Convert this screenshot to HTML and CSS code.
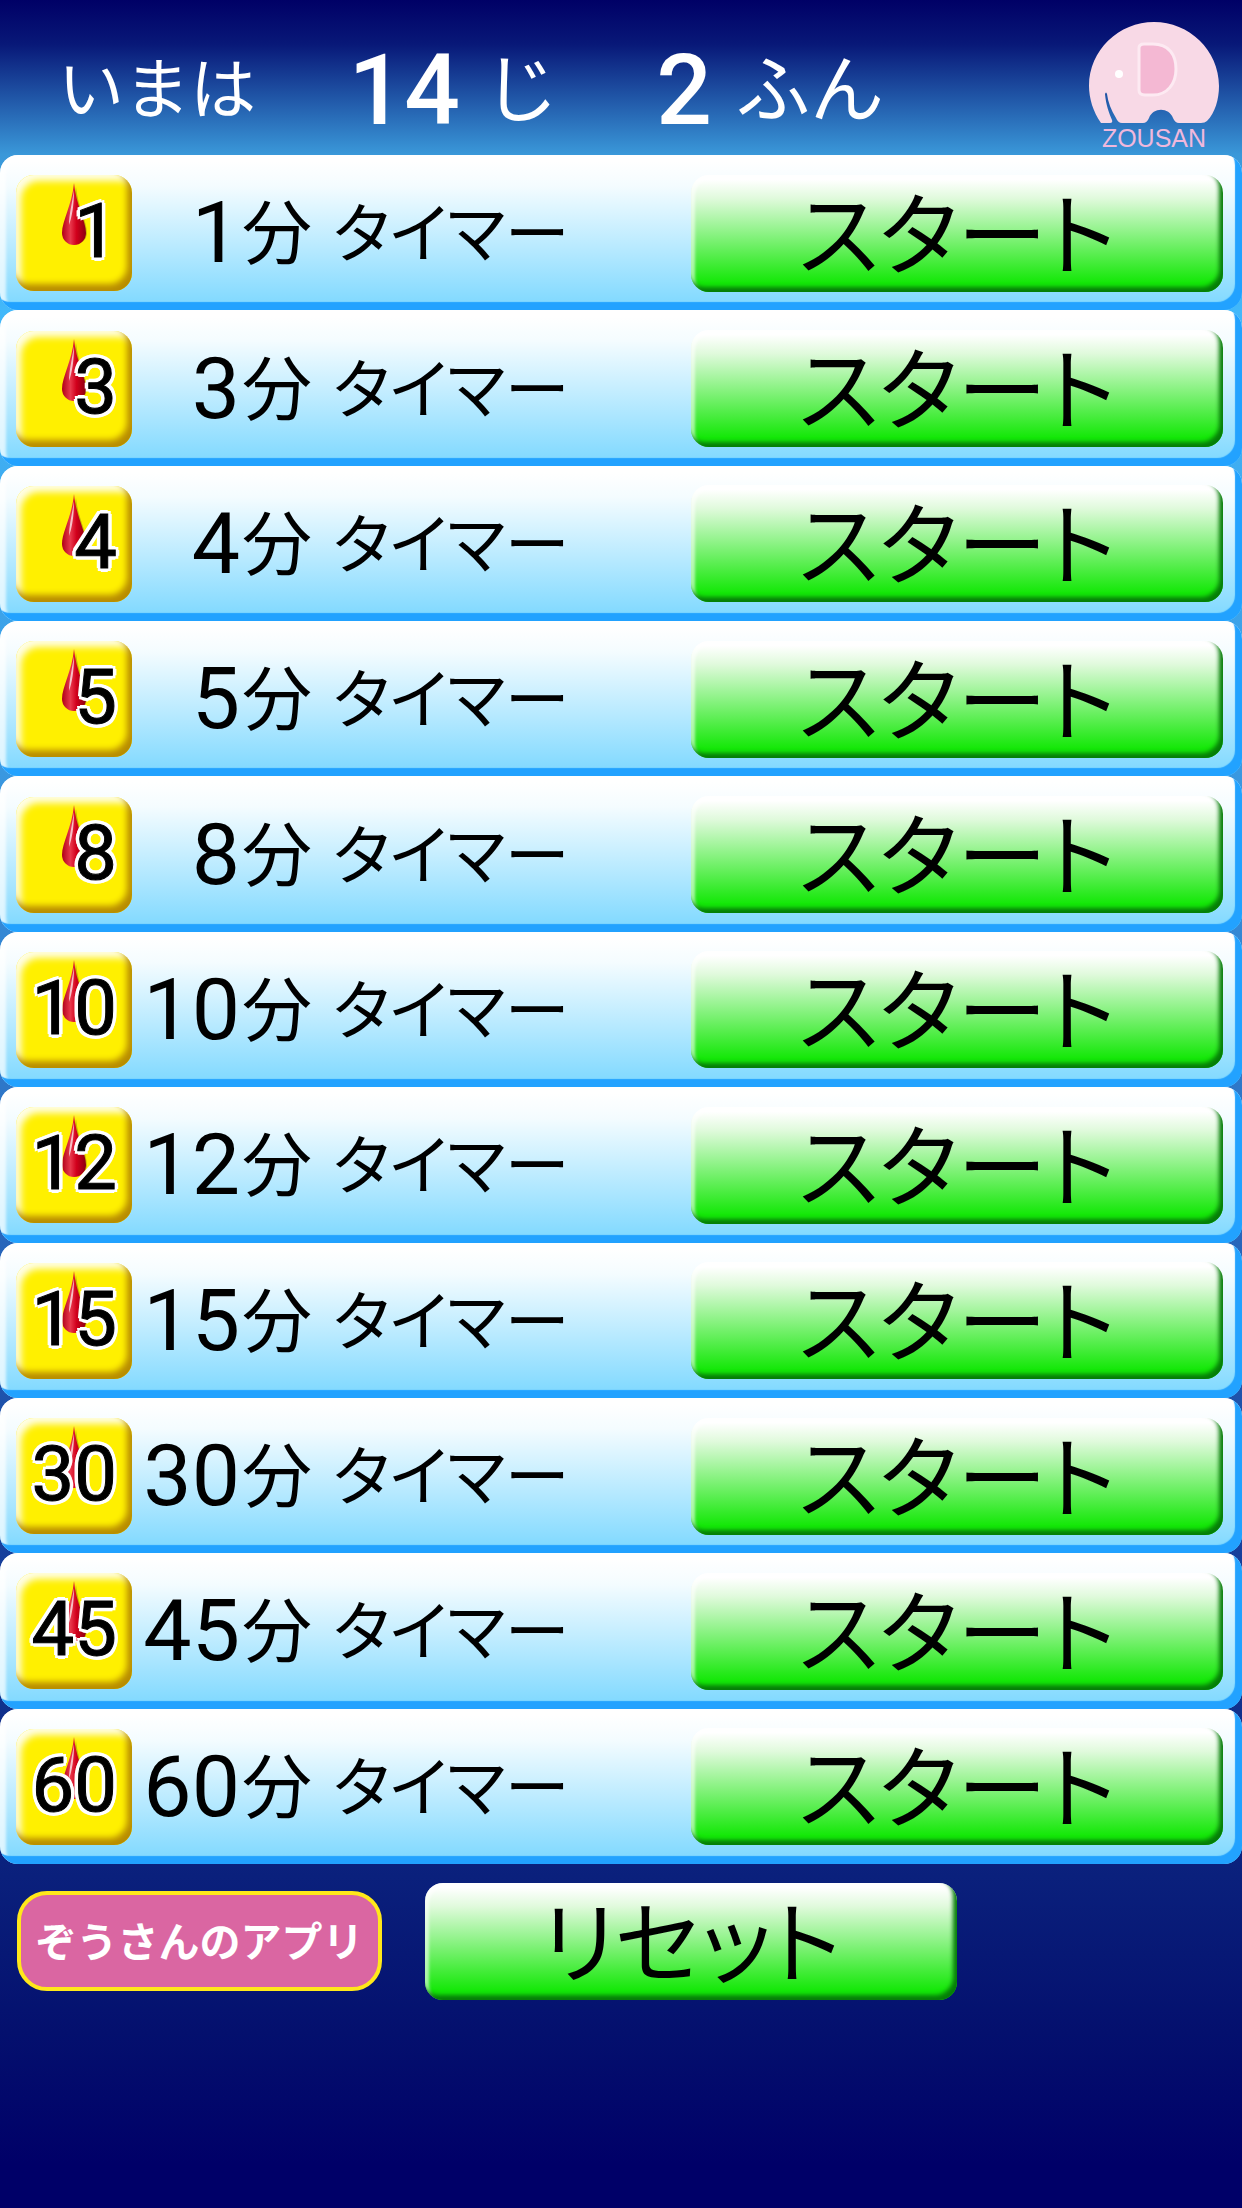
FILE: index.html
```html
<!DOCTYPE html>
<html lang="ja">
<head>
  <meta charset="UTF-8">
  <meta name="viewport" content="width=device-width, initial-scale=1">
  <title>タイマー</title>
  <link rel="stylesheet" href="styles.css">
</head>
<body>
  <svg class="defs" aria-hidden="true">
    <defs>
      <linearGradient id="drop-red" x1="0" x2="1">
        <stop offset="0" stop-color="#b00018"/>
        <stop offset="0.35" stop-color="#e8384c"/>
        <stop offset="0.6" stop-color="#d2001c"/>
        <stop offset="1" stop-color="#8c0010"/>
      </linearGradient>
    </defs>
    <symbol id="drop" viewBox="0 0 30 66">
      <path d="M16 4 C18 24 27 38 27 51 A12 12 0 0 1 4 54 C4 38 13 24 16 4Z" fill="#7a6a00" opacity="0.4"/>
      <path d="M14 0 C16 22 26 38 26 50 A12 12 0 0 1 2 50 C2 38 12 22 14 0Z" fill="url(#drop-red)"/>
      <path d="M14 7 C14 22 12 34 9 42 C9 32 12 20 14 7Z" fill="#fff" opacity="0.7"/>
    </symbol>
  </svg>

  <header class="clock">
    <span class="now">いまは</span>
    <span class="number hour">14</span>
    <span class="unit">じ</span>
    <span class="number minute">2</span>
    <span class="unit">ふん</span>
    <div class="logo">
      <svg class="elephant" viewBox="0 0 130 102" aria-hidden="true">
        <path d="M12 101 C4 90 0 76 0 64 C0 28 30 0 65 0 C100 0 130 28 130 64 C130 77 126 91 118 99 Q116 101 112 101 L90 101 Q86 101 84 96 C80 85 64 85 60 96 Q58 101 54 101 L33 101 Q29 101 27 96 C22 88 19 80 18 72 Q17 69 16 72 C17 83 20 91 23 98 Q24 101 21 101Z" fill="#f8d9e6"/>
        <path d="M50 26 Q50 22 55 22 L64 22 C80 22 87 33 87 47 C87 62 78 73 64 73 L56 73 Q50 73 50 68Z" fill="#f4b8d3" stroke="#fdeaf2" stroke-width="3"/>
        <circle cx="30" cy="52" r="4" fill="#fff"/>
      </svg>
      <span class="logo-name">ZOUSAN</span>
    </div>
  </header>

  <main class="timers">
    <div class="timer">
      <div class="badge"><svg class="drop"><use href="#drop"/></svg><span>1</span></div>
      <span class="minutes">1</span><span class="fun">分</span><span class="label">タイマー</span>
      <button type="button" class="green-btn">スタート</button>
    </div>
    <div class="timer">
      <div class="badge"><svg class="drop"><use href="#drop"/></svg><span>3</span></div>
      <span class="minutes">3</span><span class="fun">分</span><span class="label">タイマー</span>
      <button type="button" class="green-btn">スタート</button>
    </div>
    <div class="timer">
      <div class="badge"><svg class="drop"><use href="#drop"/></svg><span>4</span></div>
      <span class="minutes">4</span><span class="fun">分</span><span class="label">タイマー</span>
      <button type="button" class="green-btn">スタート</button>
    </div>
    <div class="timer">
      <div class="badge"><svg class="drop"><use href="#drop"/></svg><span>5</span></div>
      <span class="minutes">5</span><span class="fun">分</span><span class="label">タイマー</span>
      <button type="button" class="green-btn">スタート</button>
    </div>
    <div class="timer">
      <div class="badge"><svg class="drop"><use href="#drop"/></svg><span>8</span></div>
      <span class="minutes">8</span><span class="fun">分</span><span class="label">タイマー</span>
      <button type="button" class="green-btn">スタート</button>
    </div>
    <div class="timer">
      <div class="badge"><svg class="drop"><use href="#drop"/></svg><span>10</span></div>
      <span class="minutes">10</span><span class="fun">分</span><span class="label">タイマー</span>
      <button type="button" class="green-btn">スタート</button>
    </div>
    <div class="timer">
      <div class="badge"><svg class="drop"><use href="#drop"/></svg><span>12</span></div>
      <span class="minutes">12</span><span class="fun">分</span><span class="label">タイマー</span>
      <button type="button" class="green-btn">スタート</button>
    </div>
    <div class="timer">
      <div class="badge"><svg class="drop"><use href="#drop"/></svg><span>15</span></div>
      <span class="minutes">15</span><span class="fun">分</span><span class="label">タイマー</span>
      <button type="button" class="green-btn">スタート</button>
    </div>
    <div class="timer">
      <div class="badge"><svg class="drop"><use href="#drop"/></svg><span>30</span></div>
      <span class="minutes">30</span><span class="fun">分</span><span class="label">タイマー</span>
      <button type="button" class="green-btn">スタート</button>
    </div>
    <div class="timer">
      <div class="badge"><svg class="drop"><use href="#drop"/></svg><span>45</span></div>
      <span class="minutes">45</span><span class="fun">分</span><span class="label">タイマー</span>
      <button type="button" class="green-btn">スタート</button>
    </div>
    <div class="timer">
      <div class="badge"><svg class="drop"><use href="#drop"/></svg><span>60</span></div>
      <span class="minutes">60</span><span class="fun">分</span><span class="label">タイマー</span>
      <button type="button" class="green-btn">スタート</button>
    </div>
  </main>

  <footer class="actions">
    <button type="button" class="apps-btn">ぞうさんのアプリ</button>
    <button type="button" class="green-btn">リセット</button>
  </footer>
</body>
</html>
```
FILE: styles.css
```css
* {
  box-sizing: border-box;
}

body {
  margin: 0;
  min-height: 100vh;
  display: flex;
  flex-direction: column;
  font-family: Roboto, "Noto Sans CJK JP", sans-serif;
  color: #000;
  background: linear-gradient(#000066 0%, #081878 2%, #3a98d9 7%, #42b8fa 14%, #3a98e0 35%, #2a6cc0 54%, #16409c 70%, #0a207c 85%, #04106e 92%, #000068 98%);
}

.defs {
  position: absolute;
  width: 0;
  height: 0;
}

/* clock */
.clock {
  height: 155px;
  padding: 22px 22px 0 58px;
  display: flex;
  color: #fff;
  line-height: 138px;
}

.now {
  font-size: 66px;
}

.number {
  font-size: 98px;
  font-weight: 500;
  text-align: right;
}

.hour {
  width: 204px;
}

.minute {
  width: 154px;
}

.unit {
  margin-left: 24px;
  font-size: 74px;
}

.logo {
  margin-left: auto;
  display: flex;
  flex-direction: column;
  align-items: center;
}

.elephant {
  width: 132px;
  height: 102px;
}

.logo-name {
  margin-top: 2px;
  font-family: "Liberation Sans", sans-serif;
  font-size: 25px;
  line-height: 24px;
  color: #f0b8dc;
}

/* timer rows */
.timers {
  flex: 1;
  display: flex;
  flex-direction: column;
}

.timer {
  flex: 1;
  padding: 1px 19px 0 16px;
  display: flex;
  align-items: center;
  border-radius: 18px;
  background: linear-gradient(#fff 4%, #f4fcff 20%, #84daff 94%);
  box-shadow: inset -7px -8px 1px #22a2ff, inset 6px 3px 3px rgba(255,255,255,0.7);
}

.badge {
  position: relative;
  width: 116px;
  height: 116px;
  padding-right: 15px;
  border-radius: 18px;
  background-color: #fff000;
  box-shadow: inset -5px -7px 6px #b88c00, inset 5px 6px 7px rgba(255,255,255,0.9);
  font-size: 76px;
  line-height: 112px;
  text-align: right;
}

.badge span {
  position: relative;
  -webkit-text-stroke: 1px #000;
  text-shadow: 4px 0 #fff, -4px 0 #fff, 0 4px #fff, 0 -4px #fff, 3px 3px #fff, -3px 3px #fff, 3px -3px #fff, -3px -3px #fff;
}

.drop {
  position: absolute;
  left: 44px;
  top: 8px;
  width: 30px;
  height: 66px;
}

.minutes {
  width: 108px;
  font-size: 86px;
  line-height: 116px;
  text-align: right;
}

.fun {
  margin-left: 2px;
  font-size: 70px;
}

.label {
  margin-left: 21px;
  font-size: 65px;
  font-feature-settings: "palt";
}

.fun,
.label {
  padding-top: 4px;
  line-height: 110px;
}

.green-btn {
  width: 532px;
  height: 117px;
  padding: 9px 0 0;
  border: 0;
  border-radius: 18px;
  background: linear-gradient(#fff 4%, #e0fadc 20%, #14e808 92%);
  box-shadow: inset -4px -5px 4px #067d08, inset 4px 3px 3px rgba(255,255,255,0.6);
  font-family: inherit;
  font-size: 90px;
  line-height: 104px;
  font-feature-settings: "palt";
  color: #000;
  cursor: pointer;
}

.timer .green-btn {
  margin-left: auto;
}

/* bottom buttons */
.actions {
  height: 344px;
  padding: 19px 17px;
  display: flex;
  gap: 43px;
}

.apps-btn {
  width: 365px;
  height: 100px;
  margin-top: 8px;
  padding: 0 0 4px;
  border: 4px solid #ffe81a;
  border-radius: 30px;
  background-color: #da66a2;
  font-family: inherit;
  font-size: 41px;
  font-weight: bold;
  color: #fff;
  cursor: pointer;
}
```
